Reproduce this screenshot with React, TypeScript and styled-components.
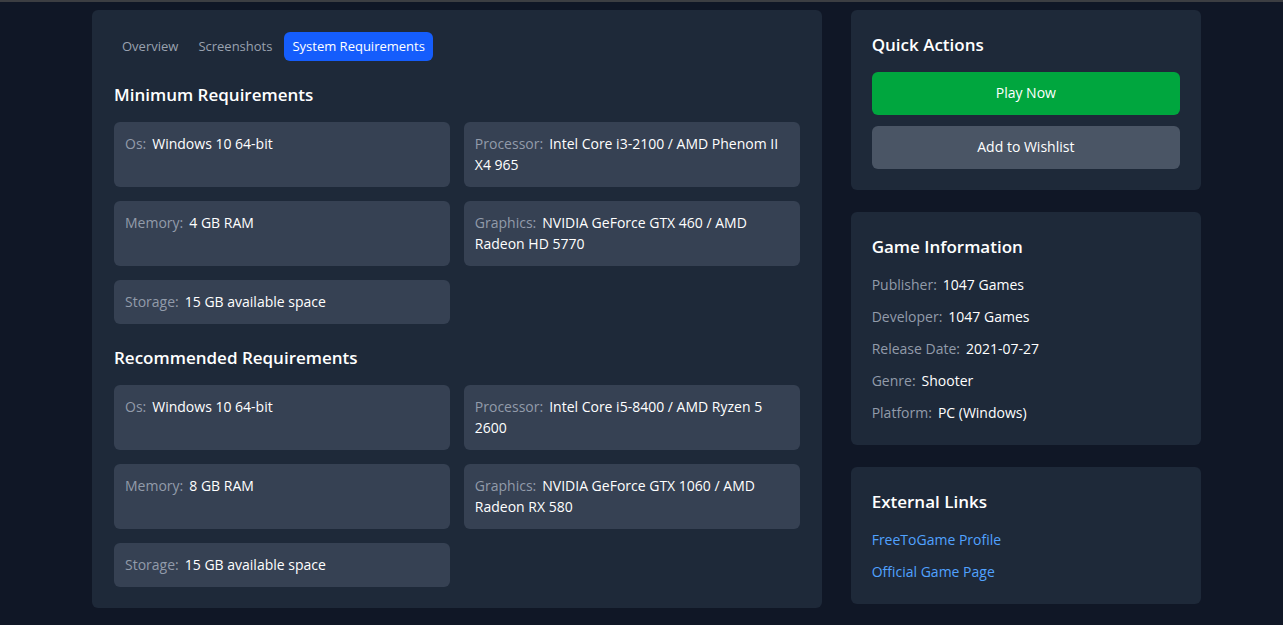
import React, { useState } from "react";
import styled, { createGlobalStyle } from "styled-components";

const GlobalStyle = createGlobalStyle`
  *, *::before, *::after { box-sizing: border-box; }
  body {
    margin: 0;
    background: #101726;
    color: #ffffff;
    font-family: "Segoe UI", "Open Sans", "Noto Sans", sans-serif;
    font-size: 14px;
    line-height: 21px;
  }
  h2, ul, dl, dd { margin: 0; padding: 0; }
  button { font: inherit; cursor: pointer; }
`;

const Page = styled.div`
  min-height: 100vh;
  padding: 8px 82px 17px 92px;
  border-top: 2px solid #3c3e42;
`;

const Layout = styled.div`
  display: grid;
  grid-template-columns: repeat(3, minmax(0, 1fr));
  gap: 29px;
  align-items: start;
`;

const Card = styled.section`
  padding: 22px 21px 21px;
  border-radius: 6px;
  background: #1e2939;
`;

const MainCard = styled(Card).attrs({ as: "main" })`
  grid-column: span 2;
  padding: 22px 22px 21px;
`;

const Sidebar = styled.aside`
  display: flex;
  flex-direction: column;
  gap: 22px;
`;

const Tabs = styled.div`
  display: flex;
  gap: 4px;
`;

const Tab = styled.button<{ $active: boolean }>`
  padding: 4px 8px;
  border: 0;
  border-radius: 6px;
  background: ${(p) => (p.$active ? "#155dfc" : "transparent")};
  color: ${(p) => (p.$active ? "#ffffff" : "#99a1af")};
  font-size: 13px;
`;

const Title = styled.h2`
  margin-bottom: 14px;
  font-size: 17px;
  font-weight: 600;
  line-height: 26px;
`;

const Group = styled.section`
  margin-top: 21px;
`;

const SpecGrid = styled.dl`
  display: grid;
  grid-template-columns: repeat(2, minmax(0, 1fr));
  gap: 14px;
`;

const Spec = styled.div`
  padding: 11px 11px 12px;
  border-radius: 6px;
  background: #364153;
`;

const Label = styled.dt`
  display: inline;
  margin-right: 6px;
  color: #929baa;
`;

const Value = styled.dd`
  display: inline;
`;

const Actions = styled.div`
  display: flex;
  flex-direction: column;
  gap: 11px;
`;

const Action = styled.button<{ $primary?: boolean }>`
  width: 100%;
  padding: 10px 11px 12px;
  border: 0;
  border-radius: 6px;
  background: ${(p) => (p.$primary ? "#00a63e" : "#4a5565")};
  color: #ffffff;
`;

const InfoList = styled.dl`
  display: flex;
  flex-direction: column;
  gap: 10px;
  line-height: 22px;
`;

const LinkList = styled.ul`
  display: flex;
  flex-direction: column;
  gap: 10px;
  line-height: 22px;
  list-style: none;
`;

const ExternalLink = styled.a`
  color: #51a2ff;
  text-decoration: none;
  &:hover { text-decoration: underline; }
`;

type Pair = [string, string];

const tabs = ["Overview", "Screenshots", "System Requirements"];

const minimum: Pair[] = [
  ["Os", "Windows 10 64-bit"],
  ["Processor", "Intel Core i3-2100 / AMD Phenom II X4 965"],
  ["Memory", "4 GB RAM"],
  ["Graphics", "NVIDIA GeForce GTX 460 / AMD Radeon HD 5770"],
  ["Storage", "15 GB available space"],
];

const recommended: Pair[] = [
  ["Os", "Windows 10 64-bit"],
  ["Processor", "Intel Core i5-8400 / AMD Ryzen 5 2600"],
  ["Memory", "8 GB RAM"],
  ["Graphics", "NVIDIA GeForce GTX 1060 / AMD Radeon RX 580"],
  ["Storage", "15 GB available space"],
];

const info: Pair[] = [
  ["Publisher", "1047 Games"],
  ["Developer", "1047 Games"],
  ["Release Date", "2021-07-27"],
  ["Genre", "Shooter"],
  ["Platform", "PC (Windows)"],
];

function Requirements({ title, specs }: { title: string; specs: Pair[] }) {
  return (
    <Group>
      <Title>{title}</Title>
      <SpecGrid>
        {specs.map(([label, value]) => (
          <Spec key={label}>
            <Label>{label}:</Label>
            <Value>{value}</Value>
          </Spec>
        ))}
      </SpecGrid>
    </Group>
  );
}

export default function App() {
  const [active, setActive] = useState("System Requirements");
  return (
    <>
      <GlobalStyle />
      <Page>
        <Layout>
          <MainCard>
            <Tabs role="tablist">
              {tabs.map((tab) => (
                <Tab
                  key={tab}
                  type="button"
                  role="tab"
                  aria-selected={tab === active}
                  $active={tab === active}
                  onClick={() => setActive(tab)}
                >
                  {tab}
                </Tab>
              ))}
            </Tabs>
            <Requirements title="Minimum Requirements" specs={minimum} />
            <Requirements title="Recommended Requirements" specs={recommended} />
          </MainCard>
          <Sidebar>
            <Card>
              <Title>Quick Actions</Title>
              <Actions>
                <Action type="button" $primary>Play Now</Action>
                <Action type="button">Add to Wishlist</Action>
              </Actions>
            </Card>
            <Card>
              <Title>Game Information</Title>
              <InfoList>
                {info.map(([label, value]) => (
                  <div key={label}>
                    <Label>{label}:</Label>
                    <Value>{value}</Value>
                  </div>
                ))}
              </InfoList>
            </Card>
            <Card>
              <Title>External Links</Title>
              <LinkList>
                <li><ExternalLink href="#profile">FreeToGame Profile</ExternalLink></li>
                <li><ExternalLink href="#official">Official Game Page</ExternalLink></li>
              </LinkList>
            </Card>
          </Sidebar>
        </Layout>
      </Page>
    </>
  );
}
